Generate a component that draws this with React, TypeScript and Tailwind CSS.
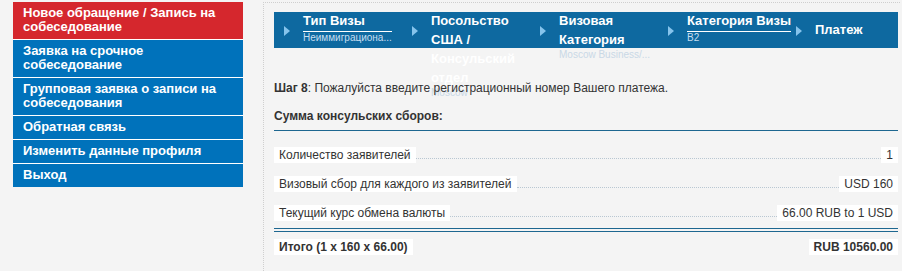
const menu = [
  { label: "Новое обращение / Запись на собеседование", active: true },
  { label: "Заявка на срочное собеседование" },
  { label: "Групповая заявка о записи на собеседования" },
  { label: "Обратная связь" },
  { label: "Изменить данные профиля" },
  { label: "Выход" },
];

type Step = { title: string; sub?: string; underline?: boolean; subLight?: boolean; center?: boolean };

const steps: Step[] = [
  { title: "Тип Визы", sub: "Неиммиграциона...", underline: true },
  { title: "Посольство США / Консульский отдел", sub: "Moscow", subLight: true },
  { title: "Визовая Категория", sub: "Moscow Business/...", subLight: true },
  { title: "Категория Визы", sub: "B2", underline: true },
  { title: "Платеж", center: true },
];

const fees = [
  { label: "Количество заявителей", value: "1" },
  { label: "Визовый сбор для каждого из заявителей", value: "USD 160" },
  { label: "Текущий курс обмена валюты", value: "66.00 RUB to 1 USD" },
];

function Sidebar() {
  return (
    <div className="w-[230px] shrink-0 mt-[2px] ml-[13px] flex flex-col divide-y divide-white self-start">
      {menu.map((item) => (
        <div
          key={item.label}
          className={`pl-[10px] pr-[6px] pt-[4px] pb-[5px] text-[13px] leading-[14px] font-bold text-white ${
            item.active ? "bg-[#d5272d]" : "bg-[#0072bb]"
          }`}
        >
          {item.label}
        </div>
      ))}
    </div>
  );
}

function StepsBar() {
  return (
    <div className="h-[36px] bg-[#0e69a0] flex">
      {steps.map((s) => (
        <div key={s.title} className="w-[128px] shrink-0 flex items-start pl-[10px]">
          <div className="mt-[14px] w-0 h-0 shrink-0 border-y-[5px] border-y-transparent border-l-[6px] border-l-[#86c4ec]" />
          {/* text block shrinks to its content, so the underline spans the widest line */}
          <div className={`ml-[13px] shrink-0 w-fit max-w-[106px] ${s.center ? "mt-[8px]" : "mt-[-1px]"}`}>
            <div
              className={`text-[13px] leading-[19px] font-bold text-white ${
                s.underline ? "border-b border-white pb-[1px]" : ""
              }`}
            >
              {s.title}
            </div>
            {s.sub && (
              <div
                className={`text-[10px] leading-[12px] whitespace-nowrap ${
                  s.subLight ? "text-[#c9d8e6]" : "text-[#c6def0]"
                }`}
              >
                {s.sub}
              </div>
            )}
          </div>
        </div>
      ))}
    </div>
  );
}

function FeeRow({ label, value }: { label: string; value: string }) {
  return (
    <div className="flex items-end h-[29px] pb-[6px]">
      <span className="bg-white px-[5px] leading-[16px]">{label}</span>
      <span className="flex-1 border-b border-dotted border-[#b9c7d2] mb-[4px]" />
      <span className="bg-white px-[5px] leading-[16px]">{value}</span>
    </div>
  );
}

export default function App() {
  return (
    <div
      className="w-[902px] h-[271px] bg-[#f4f4f4] flex text-[#333] overflow-hidden"
      style={{ fontFamily: '"Liberation Sans", Arial, sans-serif' }}
    >
      <Sidebar />
      <div className="ml-[20px] mt-[2px] w-[637px] border-l border-t border-dotted border-[#cfcfcf] pl-[10px] pr-[2px] pt-[9px]">
        <StepsBar />
        <div className="relative mt-[32px] text-[12px] leading-[16px]">
          <b>Шаг 8</b>: Пожалуйста введите регистрационный номер Вашего платежа.
        </div>
        <div className="mt-[12px] text-[12px] leading-[16px] font-bold">Сумма консульских сборов:</div>
        <div className="mt-[6px] border-t border-[#1d6790]" />
        <div className="mt-[9px] text-[12px]">
          {fees.map((f) => (
            <FeeRow key={f.label} label={f.label} value={f.value} />
          ))}
        </div>
        <div className="mt-[1px] border-t border-[#1d6790]" />
        <div className="mt-[2px] border-t border-[#1d6790]" />
        <div className="mt-[7px] flex justify-between text-[12px] font-bold leading-[16px]">
          <span className="bg-white px-[5px]">Итого (1 x 160 x 66.00)</span>
          <span className="bg-white px-[5px]">RUB 10560.00</span>
        </div>
      </div>
    </div>
  );
}
